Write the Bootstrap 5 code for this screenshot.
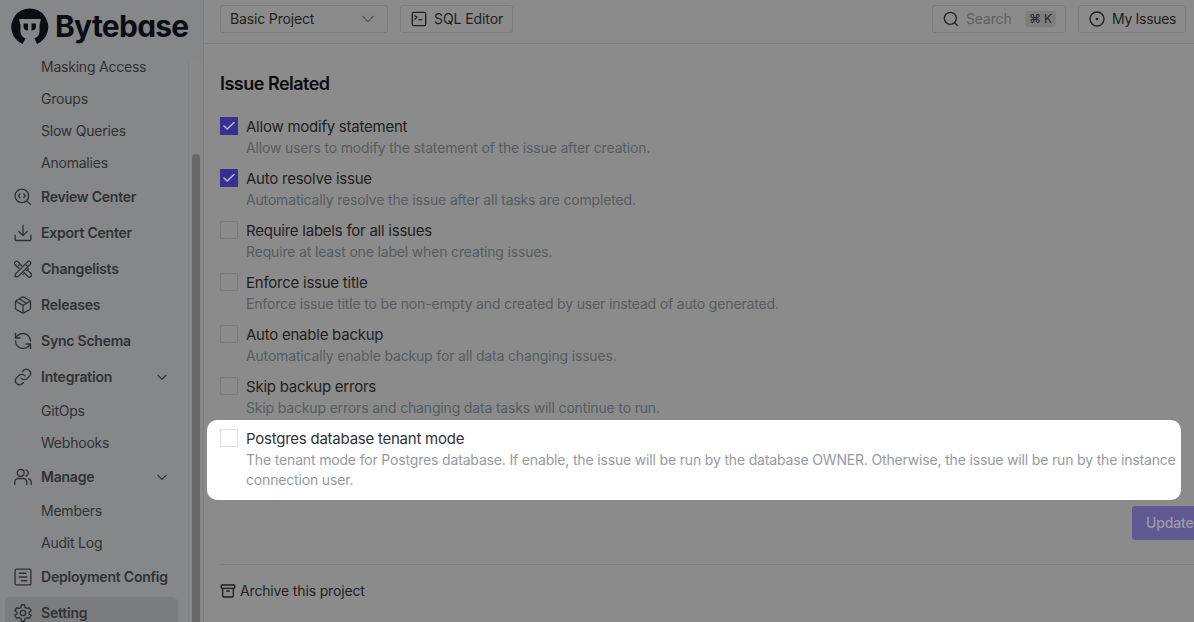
<!DOCTYPE html>
<html lang="en">
<head>
<meta charset="utf-8">
<meta name="viewport" content="width=device-width, initial-scale=1">
<title>Bytebase – Project settings</title>
<link href="https://cdn.jsdelivr.net/npm/bootstrap@5.3.0/dist/css/bootstrap.min.css" rel="stylesheet">
<style>
body{font-family:Inter,"Liberation Sans",sans-serif;font-size:14px;line-height:20px;letter-spacing:-.15px;background:#8b8b8b;color:#1e1f20;height:622px;overflow:hidden}
svg{flex:none;fill:none;stroke:currentColor;stroke-width:2;stroke-linecap:round;stroke-linejoin:round}
.side{width:204px;background:#868788;border-right:1px solid #7b7e82;color:#303234;letter-spacing:-.22px}
.brand{height:51px;padding:8px 0 0 11px;color:#0a0e14}
.brand svg{stroke:none}
.wordmark{font-size:30px;font-weight:700;line-height:37px;letter-spacing:-.75px;margin-left:6px;font-feature-settings:"cv11"}
.menu{width:188px}
.menu-wrap{height:571px;overflow:hidden}
.rail{width:15px;margin-top:9px;border-left:1px solid #7e8082;background:#888889;padding:94px 3px 0 3px}
.thumb{width:8px;height:480px;background:#686868;border-radius:4px 4px 0 0}
.sub{height:32px;flex:none;padding-left:41px;line-height:32px}
.main-item{height:32px;flex:none;margin:2px 10px 2px 5px;padding:0 9px;border-radius:6px;font-weight:600;gap:9px;white-space:nowrap}
.main-item svg{width:18px;height:18px;stroke-width:1.8}
.main-item svg.chev{width:14px;height:14px;margin-left:auto;stroke-width:2}
.active-item{background:#7b7c7d}
.top{height:44px;border-bottom:1px solid #7d8083;padding:5px 8px 0 16px;gap:12px}
.ctl{height:28px;border:1px solid #7a7c80;border-radius:3px;white-space:nowrap}
.ctl svg{width:16px;height:16px}
.picker{width:168px;padding:0 11px 0 9px}
.picker svg{color:#55585c;stroke-width:2}
.editor{width:113px;padding-left:10px;gap:7px;letter-spacing:-.08px}
.finder{width:134px;padding:0 9px 0 10px;gap:7px;color:#242527}
.finder .hint{color:#5c6063}
.issues{width:108px;padding-left:10px;gap:7px;letter-spacing:-.3px;padding-right:0}
.keys{background:#7e7e7e;border-radius:3px;font-size:12px;line-height:16px;padding:0 4px;color:#242628}
.content{padding:29px 13px 0 16px}
.title{font-size:18px;line-height:22px;font-weight:600;letter-spacing:-.51px;color:#0c0c0d;margin:0 0 21px}
.opt{gap:8px;margin-bottom:10px}
.box{width:18px;height:18px;border:1px solid #7b7b7c;margin-top:1px;flex:none}
.box.on{background:#382f93;border-color:#382f93;color:#b9b8c4}
.box svg{width:16px;height:16px;display:block;stroke-width:1.6}
.lbl{font-size:15px;line-height:22px;letter-spacing:-.24px}
.desc{color:#565c5f;white-space:nowrap;letter-spacing:-.165px}
.spot{background:#fff;border-radius:10px;margin:-8px 0 0 -13px;padding:8px 0 10px 13px;color:#303236}
.spot .box{border-color:#dcdde0}
.spot .desc{color:#969a9f;white-space:normal}
.update{width:76px;height:34px;margin:6px -27px 24px auto;padding:0 14px;background:#615992;color:#9c9ba8;border-radius:3px;font-weight:500;line-height:34px}
.archive{border-top:1px solid #7d7e7f;padding-top:16px;margin-right:-13px;gap:4px}
</style>
</head>
<body>
<div class="d-flex h-100">
<aside class="side flex-shrink-0">
  <div class="brand d-flex">
    <svg width="38" height="38" viewBox="0 0 38 38"><path fill="currentColor" d="M11.500 36A18.500 18.500 0 1 1 26 36L23.500 30.500Q28 28.500 28.500 24V17L30 11H8L9.500 17V24Q10 28.500 14.500 30.500Z"/><path fill="currentColor" d="M12.500 15.500h4.500v7q-4.500 0-4.500-4zM20.500 15.500H25v3q0 4-4.500 4z"/></svg>
    <span class="wordmark">Bytebase</span>
  </div>
  <div class="menu-wrap d-flex">
    <nav class="menu d-flex flex-column">
      <div class="sub">Masking Access</div><div class="sub">Groups</div><div class="sub">Slow Queries</div><div class="sub">Anomalies</div>
      <div class="main-item d-flex align-items-center"><svg viewBox="0 0 24 24"><path d="m22 22-4.500-4.500M8 8l-2 2.500L8 13M13 8l2 2.500-2 2.500"/><circle cx="10.500" cy="10.500" r="9"/></svg>Review Center</div>
      <div class="main-item d-flex align-items-center"><svg viewBox="0 0 24 24"><path d="M1.500 15v4.500a2.500 2.500 0 0 0 2.500 2.500h16a2.500 2.500 0 0 0 2.500-2.500V15M6.500 10l5.500 5.500 5.500-5.500M12 15V2"/></svg>Export Center</div>
      <div class="main-item d-flex align-items-center"><svg viewBox="0 0 24 24"><path d="m10 7.500-4.500-5a2.800 2.800 0 0 0-4 4l5 4.500M3.500 22.500l-2-.5.500-3.500L18 2.500a2.400 2.400 0 0 1 3.500 3.500L6 21.500zM15 5.500l3.500 3.500M14 17.500l4.500 4.500a2.800 2.800 0 0 0 4-4L18 13.500M12 19l2-2M17 14l2-2M8 5.500l-2 2"/></svg>Changelists</div>
      <div class="main-item d-flex align-items-center"><svg viewBox="0 0 24 24"><path d="M11 22.500 3 18a2 2 0 0 1-1-2V8a2 2 0 0 1 1-2l8-4.500a2 2 0 0 1 2 0L21 6a2 2 0 0 1 1 2v8a2 2 0 0 1-1 2l-8 4.500a2 2 0 0 1-2 0zM2.500 7 12 12.500 21.500 7M12 12.500V22M7 4l9.500 5.500"/></svg>Releases</div>
      <div class="main-item d-flex align-items-center"><svg viewBox="0 0 24 24"><path d="M22 12A10 10 0 0 0 12 2a11 11 0 0 0-7.500 3L2 8M2 2v6h6M2 12a10 10 0 0 0 10 10 11 11 0 0 0 7.500-3l2.500-3M16 16h6v6"/></svg>Sync Schema</div>
      <div class="main-item d-flex align-items-center"><svg viewBox="0 0 24 24"><path d="M9.500 13.500a5.500 5.500 0 0 0 8 .5l3.500-3.500a5.500 5.500 0 0 0-7.700-7.700l-2 2M14.500 10.500a5.500 5.500 0 0 0-8-.5L3 13.500a5.500 5.500 0 0 0 7.700 7.700l2-2"/></svg>Integration<svg class="chev" viewBox="0 0 24 24"><path d="m5 9 7 7 7-7"/></svg></div>
      <div class="sub">GitOps</div><div class="sub">Webhooks</div>
      <div class="main-item d-flex align-items-center"><svg viewBox="0 0 24 24"><path d="M17 22v-3a5 5 0 0 0-5-5H6a5 5 0 0 0-5 5v3M23 22v-3a5 5 0 0 0-3.500-4.500M16 2.500a4.500 4.500 0 0 1 0 8.500"/><circle cx="9" cy="6.500" r="4.500"/></svg>Manage<svg class="chev" viewBox="0 0 24 24"><path d="m5 9 7 7 7-7"/></svg></div>
      <div class="sub">Members</div><div class="sub">Audit Log</div>
      <div class="main-item d-flex align-items-center"><svg viewBox="0 0 24 24"><rect x="1.500" y="1.500" width="21" height="21" rx="2"/><path d="M7 7h9M7 12h6M10 17h7M13 12h4"/></svg>Deployment Config</div>
      <div class="main-item active-item d-flex align-items-center"><svg viewBox="0 0 24 24"><path d="M10 1h4l.7 3.500 2.500 1.400L20.500 5l2.300 3.800L20 11v2l2.800 2.200-2.300 3.800-3.300-.9-2.500 1.400L14 23h-4l-.7-3.500-2.500-1.400-3.300.9-2.300-3.800L4 13v-2L1.200 8.800 3.500 5l3.300.9 2.500-1.400z"/><circle cx="12" cy="12" r="3.500"/></svg>Setting</div>
    </nav>
    <div class="rail"><div class="thumb"></div></div>
  </div>
</aside>
<main class="flex-grow-1">
  <header class="top d-flex">
    <div class="ctl picker d-flex align-items-center justify-content-between">Basic Project<svg viewBox="0 0 24 24"><path d="m4 8 8 8 8-8"/></svg></div>
    <div class="ctl editor d-flex align-items-center"><svg viewBox="0 0 24 24"><rect x="2" y="2" width="20" height="20" rx="2"/><path d="m6 7 3 2.500L6 12M12 13h4"/></svg>SQL Editor</div>
    <div class="ctl finder d-flex align-items-center ms-auto"><svg viewBox="0 0 24 24"><circle cx="11" cy="11" r="9"/><path d="m22 22-4.500-4.500"/></svg><span class="hint">Search</span><span class="keys ms-auto">⌘ K</span></div>
    <div class="ctl issues d-flex align-items-center"><svg viewBox="0 0 24 24"><circle cx="12" cy="12" r="10.500"/><circle cx="12" cy="12" r="1"/></svg>My Issues</div>
  </header>
  <section class="content">
    <h2 class="title">Issue Related</h2>
    <div class="opt d-flex"><div class="box on"><svg viewBox="0 0 16 16"><path d="m3 8 3.200 3L13 4.500"/></svg></div><div><div class="lbl">Allow modify statement</div><div class="desc">Allow users to modify the statement of the issue after creation.</div></div></div>
    <div class="opt d-flex"><div class="box on"><svg viewBox="0 0 16 16"><path d="m3 8 3.200 3L13 4.500"/></svg></div><div><div class="lbl">Auto resolve issue</div><div class="desc">Automatically resolve the issue after all tasks are completed.</div></div></div>
    <div class="opt d-flex"><div class="box"></div><div><div class="lbl">Require labels for all issues</div><div class="desc">Require at least one label when creating issues.</div></div></div>
    <div class="opt d-flex"><div class="box"></div><div><div class="lbl">Enforce issue title</div><div class="desc">Enforce issue title to be non-empty and created by user instead of auto generated.</div></div></div>
    <div class="opt d-flex"><div class="box"></div><div><div class="lbl">Auto enable backup</div><div class="desc">Automatically enable backup for all data changing issues.</div></div></div>
    <div class="opt d-flex"><div class="box"></div><div><div class="lbl">Skip backup errors</div><div class="desc">Skip backup errors and changing data tasks will continue to run.</div></div></div>
    <div class="opt spot d-flex"><div class="box"></div><div><div class="lbl">Postgres database tenant mode</div><div class="desc">The tenant mode for Postgres database. If enable, the issue will be run by the database OWNER. Otherwise, the issue will be run by the instance connection user.</div></div></div>
    <div class="update">Update</div>
    <div class="archive d-flex align-items-center"><svg width="16" height="16" viewBox="0 0 24 24"><rect x="2" y="3" width="20" height="5" rx="1"/><path d="M4 8v11a2 2 0 0 0 2 2h12a2 2 0 0 0 2-2V8M10 12h4"/></svg>Archive this project</div>
  </section>
</main>
</div>
<script src="https://cdn.jsdelivr.net/npm/bootstrap@5.3.0/dist/js/bootstrap.bundle.min.js"></script>
</body>
</html>
